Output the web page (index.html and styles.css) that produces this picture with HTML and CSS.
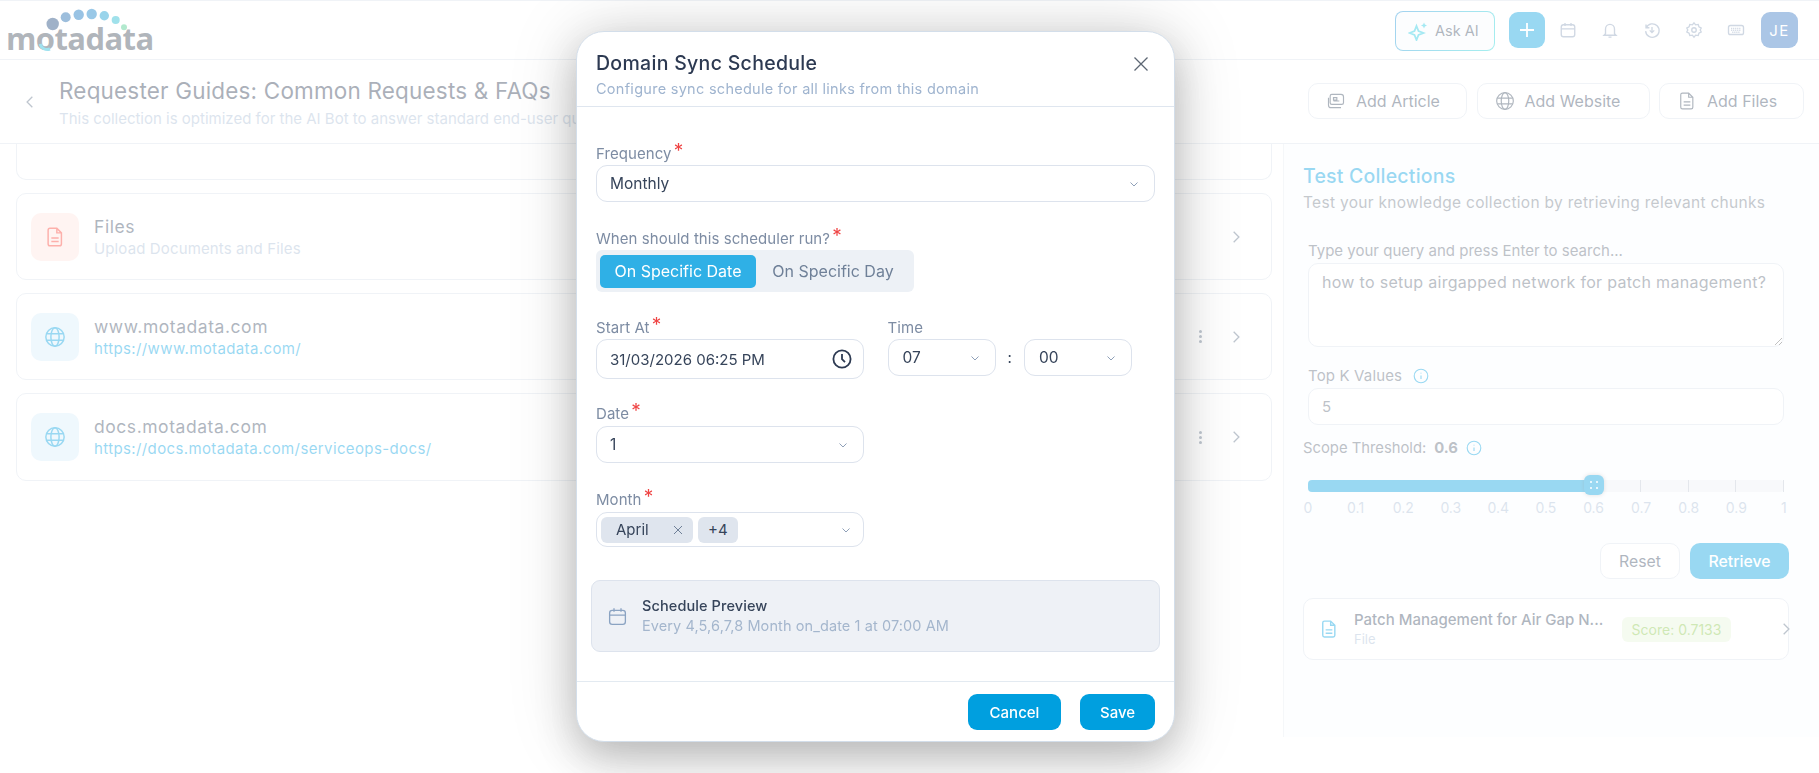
FILE: index.html
```html
<!DOCTYPE html>
<html lang="en">
<head>
    <meta charset="UTF-8">
    <meta name="viewport" content="width=device-width, initial-scale=1.0">
    <title>Domain Sync Schedule</title>
    <link rel="stylesheet" href="styles.css">
</head>
<body>

<svg class="sprite" xmlns="http://www.w3.org/2000/svg">
    <symbol id="i-cal" viewBox="0 0 24 24"><rect x="3" y="5" width="18" height="16" rx="3"/><path d="M3 10.5h18M8 2.5v4M16 2.5v4"/></symbol>
    <symbol id="i-bell" viewBox="0 0 24 24"><path d="M6 17V10.5a6 6 0 0 1 12 0V17l2 2H4zM10 21.5h4"/></symbol>
    <symbol id="i-history" viewBox="0 0 24 24"><path d="M4 4.5v4.5h4.5M4.3 9a9 9 0 1 1-.8 4.5M12 8v7M9 12.5l3 3 3-3"/></symbol>
    <symbol id="i-gear" viewBox="0 0 24 24"><circle cx="12" cy="12" r="3"/><path d="M12 2.5l2.2 2.6 3.4-.5 1 3.2 3 1.7-1.3 2.5 1.3 2.5-3 1.7-1 3.2-3.4-.5-2.2 2.6-2.2-2.6-3.4.5-1-3.2-3-1.7L3.700 12 2.400 9.500l3-1.700 1-3.200 3.400.5z"/></symbol>
    <symbol id="i-keys" viewBox="0 0 24 24"><rect x="2" y="6" width="20" height="12" rx="2.500"/><path d="M5.500 10h13M5.500 12.500h13M7 15h10" stroke-dasharray="1.500 1.200"/></symbol>
    <symbol id="i-globe" viewBox="0 0 24 24"><circle cx="12" cy="12" r="10"/><ellipse cx="12" cy="12" rx="4.500" ry="10"/><path d="M2.800 8.500h18.400M2.800 15.500h18.400"/></symbol>
    <symbol id="i-file" viewBox="0 0 24 24"><path d="M6.500 2.500h7.500l5 5v12a2 2 0 0 1-2 2h-10.500a2 2 0 0 1-2-2v-15a2 2 0 0 1 2-2zM14 2.500v5h5M8 13h8M8 17h8"/></symbol>
    <symbol id="i-article" viewBox="0 0 24 24"><path d="M7 4h11a3 3 0 0 1 3 3v7a2 2 0 0 1-2 2H7a2 2 0 0 1-2-2V6a2 2 0 0 1 2-2zM3 8v9a3 3 0 0 0 3 3h12M9 8h4v3H9zM16 12H9"/></symbol>
    <symbol id="i-down" viewBox="0 0 12 12"><path d="M2.500 4.500L6 8l3.500-3.500"/></symbol>
    <symbol id="i-right" viewBox="0 0 12 12"><path d="M4 1.500L8.500 6 4 10.500"/></symbol>
    <symbol id="i-info" viewBox="0 0 16 16"><circle cx="8" cy="8" r="6.800"/><path d="M8 7.500v3.500M8 4.700v.8"/></symbol>
</svg>

<div class="app">
    <header class="topbar">
        <div class="logo">
            <svg class="logo-dots" viewBox="0 0 150 60" width="150" height="60">
                <circle cx="52.700" cy="24" r="6.200" fill="#0f3c75"/>
                <circle cx="65.700" cy="17.300" r="5" fill="#0a5ea8"/>
                <circle cx="78.700" cy="14.700" r="5.200" fill="#0069bb"/>
                <circle cx="91.700" cy="14" r="5.200" fill="#0076c4"/>
                <circle cx="104.300" cy="15.700" r="4.700" fill="#0093cc"/>
                <circle cx="115.700" cy="20" r="4" fill="#12b4cc"/>
                <circle cx="124" cy="27.300" r="3" fill="#3fc886"/>
                <path d="M40 44a7.500 7.500 0 0 0 10 5" fill="none" stroke="#10b6d8" stroke-width="3"/>
            </svg>
            <span class="logo-text">motadata</span>
        </div>
        <div class="top-actions">
            <button class="ask-ai">
                <svg class="spark" viewBox="0 0 20 20" width="20" height="20"><path d="M8.500 5l2 5 5 2-5 2-2 5-2-5-5-2 5-2z"/><path d="M16 1.500l.9 2.100 2.100.9-2.100.9-.9 2.100-.9-2.100-2.100-.9 2.100-.9z" class="spark-fill"/></svg>
                Ask AI
            </button>
            <button class="plus-btn">
                <svg viewBox="0 0 20 20" width="20" height="20"><path d="M10 3v14M3 10h14"/></svg>
            </button>
            <span class="nav-icons">
                <svg class="nav-icon"><use href="#i-cal"/></svg>
                <svg class="nav-icon"><use href="#i-bell"/></svg>
                <svg class="nav-icon"><use href="#i-history"/></svg>
                <svg class="nav-icon"><use href="#i-gear"/></svg>
                <svg class="nav-icon"><use href="#i-keys"/></svg>
            </span>
            <span class="avatar">JE</span>
        </div>
    </header>

    <section class="page-head">
        <svg class="back-icon"><use href="#i-right"/></svg>
        <div class="page-titles">
            <h1>Requester Guides: Common Requests &amp; FAQs</h1>
            <p>This collection is optimized for the AI Bot to answer standard end-user questions and common requests</p>
        </div>
        <div class="head-btns">
            <button class="add-btn btn-article"><svg><use href="#i-article"/></svg>Add Article</button>
            <button class="add-btn btn-website"><svg><use href="#i-globe"/></svg>Add Website</button>
            <button class="add-btn btn-files"><svg><use href="#i-file"/></svg>Add Files</button>
        </div>
    </section>

    <div class="columns">
        <main class="sources">
            <div class="card card-cut"></div>

            <div class="card">
                <span class="tile tile-red"><svg><use href="#i-file"/></svg></span>
                <div class="card-text">
                    <div class="card-title">Files</div>
                    <div class="card-sub">Upload Documents and Files</div>
                </div>
                <svg class="card-arrow"><use href="#i-right"/></svg>
            </div>

            <div class="card">
                <span class="tile tile-blue"><svg><use href="#i-globe"/></svg></span>
                <div class="card-text">
                    <div class="card-title">www.motadata.com</div>
                    <div class="card-link">https://www.motadata.com/</div>
                </div>
                <span class="kebab"><i></i><i></i><i></i></span>
                <svg class="card-arrow"><use href="#i-right"/></svg>
            </div>

            <div class="card card-last">
                <span class="tile tile-blue"><svg><use href="#i-globe"/></svg></span>
                <div class="card-text">
                    <div class="card-title">docs.motadata.com</div>
                    <div class="card-link">https://docs.motadata.com/serviceops-docs/</div>
                </div>
                <span class="kebab"><i></i><i></i><i></i></span>
                <svg class="card-arrow"><use href="#i-right"/></svg>
            </div>
        </main>

        <aside class="test-panel">
            <h2>Test Collections</h2>
            <p class="test-sub">Test your knowledge collection by retrieving relevant chunks</p>

            <label class="test-label query-label">Type your query and press Enter to search...</label>
            <textarea class="query" readonly>how to setup airgapped network for patch management?</textarea>

            <div class="test-label topk-label">Top K Values <svg class="info"><use href="#i-info"/></svg></div>
            <div class="topk">5</div>

            <div class="scope">Scope Threshold: <b>0.6</b> <svg class="info"><use href="#i-info"/></svg></div>

            <div class="track">
                <span class="tick"></span><span class="tick"></span><span class="tick"></span><span class="tick"></span>
                <span class="fill"></span>
                <span class="thumb"><i></i><i></i><i></i><i></i></span>
            </div>
            <div class="scale">
                <span>0</span><span>0.1</span><span>0.2</span><span>0.3</span><span>0.4</span><span>0.5</span>
                <span>0.6</span><span>0.7</span><span>0.8</span><span>0.9</span><span>1</span>
            </div>

            <div class="test-btns">
                <button class="reset">Reset</button>
                <button class="retrieve">Retrieve</button>
            </div>

            <div class="result">
                <svg class="result-icon"><use href="#i-file"/></svg>
                <div class="result-text">
                    <div class="result-title">Patch Management for Air Gap N...</div>
                    <div class="result-type">File</div>
                </div>
                <span class="score">Score: 0.7133</span>
                <svg class="result-arrow"><use href="#i-right"/></svg>
            </div>
        </aside>
    </div>
</div>

<div class="overlay">
    <div class="modal">
        <div class="modal-head">
            <div>
                <h3>Domain Sync Schedule</h3>
                <p>Configure sync schedule for all links from this domain</p>
            </div>
            <svg class="close" viewBox="0 0 16 16" width="16" height="16"><path d="M1.500 1.500l13 13M14.500 1.500l-13 13"/></svg>
        </div>

        <div class="modal-body">
            <div class="field field-freq">
                <div class="label">Frequency <em>*</em></div>
                <div class="select">Monthly <svg class="chev"><use href="#i-down"/></svg></div>
            </div>

            <div class="field field-when">
                <div class="label">When should this scheduler run? <em>*</em></div>
                <div class="segment">
                    <span class="seg seg-on">On Specific Date</span>
                    <span class="seg">On Specific Day</span>
                </div>
            </div>

            <div class="time-row">
                <div class="field field-start">
                    <div class="label">Start At <em>*</em></div>
                    <div class="select select-date">
                        31/03/2026 06:25 PM
                        <svg class="clock" viewBox="0 0 20 20" width="20" height="20"><circle cx="10" cy="10" r="8.600"/><path d="M10 5v5.200l3 3"/></svg>
                    </div>
                </div>
                <div class="field field-time">
                    <div class="label">Time</div>
                    <div class="time-selects">
                        <div class="select select-time">07 <svg class="chev"><use href="#i-down"/></svg></div>
                        <span class="colon">:</span>
                        <div class="select select-time">00 <svg class="chev"><use href="#i-down"/></svg></div>
                    </div>
                </div>
            </div>

            <div class="field field-date">
                <div class="label">Date <em>*</em></div>
                <div class="select select-half">1 <svg class="chev"><use href="#i-down"/></svg></div>
            </div>

            <div class="field field-month">
                <div class="label">Month <em>*</em></div>
                <div class="select select-half select-tags">
                    <span class="tag tag-april">April <svg viewBox="0 0 10 10" width="10" height="10"><path d="M1 1l8 8M9 1l-8 8"/></svg></span>
                    <span class="tag">+4</span>
                    <svg class="chev"><use href="#i-down"/></svg>
                </div>
            </div>

            <div class="preview">
                <svg class="preview-icon"><use href="#i-cal"/></svg>
                <div>
                    <div class="preview-title">Schedule Preview</div>
                    <div class="preview-sub">Every 4,5,6,7,8 Month on_date 1 at 07:00 AM</div>
                </div>
            </div>
        </div>

        <div class="modal-foot">
            <button class="foot-btn btn-cancel">Cancel</button>
            <button class="foot-btn btn-save">Save</button>
        </div>
    </div>
</div>

</body>
</html>
```
FILE: styles.css
```css
* {
    box-sizing: border-box;
}

body, html {
    margin: 0;
    padding: 0;
    height: 100%;
    overflow: hidden;
    font-family: Inter, "Open Sans", sans-serif;
    color: #2d3a52;
    background: #fff;
}

h1, h2, h3, p {
    margin: 0;
    font-weight: 500;
}

button {
    font-family: inherit;
    cursor: pointer;
}

.sprite {
    display: none;
}

/* App frame */
.app {
    height: 737px;
    border-top: 1px solid #d9e1ea;
    display: flex;
    flex-direction: column;
}

.topbar {
    height: 59px;
    flex: none;
    display: flex;
    justify-content: space-between;
    border-bottom: 1px solid #d9e1ea;
    padding-right: 21px;
}

.logo {
    position: relative;
    width: 160px;
    padding: 17px 0 0 6px;
}

.logo-dots {
    position: absolute;
    left: 0;
    top: -1px;
}

.logo-text {
    font-family: "Open Sans", sans-serif;
    font-weight: 700;
    font-size: 31px;
    line-height: 40px;
    letter-spacing: -0.6px;
    color: #3a4656;
}

.top-actions {
    display: flex;
    align-items: center;
}

.ask-ai {
    width: 100px;
    height: 40px;
    margin-top: 1px;
    border: 1.5px solid transparent;
    border-radius: 8px;
    background: linear-gradient(#f8fafc, #f8fafc) padding-box, linear-gradient(120deg, #1b8fd8, #1fd6d6) border-box;
    color: #394a5f;
    font-size: 14.500px;
    font-weight: 400;
    display: flex;
    align-items: center;
    gap: 7px;
    padding: 0 0 0 12px;
}

.spark path {
    fill: none;
    stroke: #1ec8e0;
    stroke-width: 1.800;
}

.spark .spark-fill {
    fill: #1ec8e0;
    stroke: none;
}

.plus-btn {
    width: 36px;
    height: 36px;
    margin-left: 14px;
    border: none;
    border-radius: 9px;
    background: #009fdf;
    padding: 8px;
}

.plus-btn path {
    stroke: #fff;
    stroke-width: 1.800;
    fill: none;
}

.nav-icons {
    display: flex;
    gap: 24px;
    margin: 0 16px 0 14px;
}

.nav-icon {
    width: 18px;
    height: 18px;
    fill: none;
    stroke: #899db9;
    stroke-width: 1.800;
}

.avatar {
    width: 37px;
    height: 36px;
    border-radius: 9px;
    background: #2d70c0;
    color: #fff;
    font-size: 15px;
    letter-spacing: 1.500px;
    display: flex;
    align-items: center;
    justify-content: center;
}

/* Page heading */
.page-head {
    height: 84px;
    flex: none;
    display: flex;
    border-bottom: 1px solid #d9e1ea;
    padding-right: 15px;
}

.back-icon {
    width: 14px;
    height: 14px;
    margin: 35px 0 0 23px;
    transform: scaleX(-1);
    fill: none;
    stroke: #5f7187;
    stroke-width: 1.100;
}

.page-titles {
    flex: 1;
    min-width: 0;
    padding: 15px 0 0 22px;
    white-space: nowrap;
    overflow: hidden;
}

.page-titles h1 {
    font-size: 22.500px;
    line-height: 32px;
    font-weight: 400;
    letter-spacing: 0.18px;
}

.page-titles p {
    font-size: 15px;
    line-height: 22px;
    margin-top: 1px;
    font-weight: 400;
    color: #a9bcd4;
}

.head-btns {
    display: flex;
    gap: 9.500px;
    padding-top: 23px;
}

.add-btn {
    height: 36px;
    background: #fff;
    border: 1px solid #d9e1ea;
    border-radius: 10px;
    color: #394a5f;
    font-size: 16px;
    display: flex;
    align-items: center;
    gap: 10px;
    padding: 0 0 0 17px;
}

.add-btn svg {
    width: 20px;
    height: 20px;
    fill: none;
    stroke: #394a5f;
    stroke-width: 1.400;
}

.btn-article {
    width: 159px;
}

.btn-website {
    width: 173px;
}

.btn-files {
    width: 145px;
}

/* Columns */
.columns {
    flex: 1;
    display: flex;
    min-height: 0;
}

.sources {
    width: 1283px;
    flex: none;
    padding: 0 11px 0 16px;
    display: flex;
    flex-direction: column;
    gap: 13px;
}

.card {
    height: 87px;
    flex: none;
    border: 1px solid #d9e1ea;
    border-radius: 10px;
    background: #fff;
    display: flex;
    align-items: center;
    padding: 0 28px 0 14px;
}

.card-cut {
    height: 36px;
    border-top: none;
    border-radius: 0 0 10px 10px;
}

.card-last {
    height: 88px;
}

.tile {
    width: 48px;
    height: 48px;
    flex: none;
    border-radius: 10px;
    display: flex;
    align-items: center;
    justify-content: center;
}

.tile svg {
    width: 22px;
    height: 22px;
    fill: none;
    stroke-width: 1.600;
}

.tile-red {
    background: #ffe3de;
}

.tile-red svg {
    stroke: #f93a2f;
}

.tile-blue {
    background: #d7edfa;
}

.tile-blue svg {
    stroke: #009fdf;
}

.card-text {
    flex: 1;
    margin-left: 15px;
    padding-top: 2px;
}

.card-title {
    font-size: 17.500px;
    line-height: 22px;
    letter-spacing: 0.55px;
    color: #394a5f;
}

.card-sub, .card-link {
    font-size: 15px;
    line-height: 22px;
    letter-spacing: 0.13px;
    color: #a9bcd4;
}

.card-link {
    letter-spacing: 0.38px;
    color: #009fdf;
}

.kebab {
    display: flex;
    flex-direction: column;
    gap: 2px;
    margin-right: 27px;
}

.kebab i {
    width: 3px;
    height: 3px;
    border-radius: 50%;
    background: #5f7187;
}

.card-arrow {
    width: 14px;
    height: 14px;
    fill: none;
    stroke: #5f7187;
    stroke-width: 1.100;
}

/* Test panel */
.test-panel {
    flex: 1;
    min-width: 0;
    border-left: 1px solid #e5eaf0;
    background: #fafcff;
    padding: 19px 30px 0 19px;
}

.test-panel h2 {
    font-size: 19.500px;
    line-height: 26px;
    letter-spacing: 0.2px;
    color: #009fdf;
}

.test-sub {
    font-size: 15.500px;
    line-height: 22px;
    letter-spacing: 0.3px;
    margin-top: 3px;
    font-weight: 400;
    color: #6e7885;
    white-space: nowrap;
}

.test-label {
    font-size: 15px;
    line-height: 20px;
    letter-spacing: 0.15px;
    color: #5a6675;
    margin-left: 5px;
    display: block;
}

.query-label {
    margin-top: 27px;
    letter-spacing: 0;
}

.query {
    display: block;
    width: 476px;
    height: 84px;
    margin: 2px 0 0 5px;
    border: 1px solid #d9e1ea;
    border-radius: 10px;
    background: #fff;
    padding: 7px 13px;
    font-family: inherit;
    font-size: 16px;
    line-height: 22px;
    letter-spacing: 0.3px;
    color: #5a6675;
    outline: none;
}

.topk-label {
    margin-top: 19px;
    display: flex;
    align-items: center;
    gap: 11px;
}

.info {
    width: 16px;
    height: 16px;
    fill: none;
    stroke: #009fdf;
    stroke-width: 1.100;
}

.topk {
    width: 476px;
    height: 37px;
    margin: 2px 0 0 5px;
    border: 1px solid #d9e1ea;
    border-radius: 10px;
    background: #fff;
    padding: 0 13px;
    font-size: 15px;
    line-height: 35px;
    color: #5a6675;
}

.scope {
    margin-top: 13px;
    font-size: 14.800px;
    line-height: 20px;
    color: #5a6675;
    display: flex;
    align-items: center;
    gap: 8px;
}

.scope b {
    font-weight: 700;
}

.track {
    position: relative;
    width: 476px;
    height: 12px;
    margin: 22px 0 0 5px;
    border-radius: 4px;
    background: #edf1f6;
    display: flex;
    justify-content: space-between;
    padding-left: 332px;
}

.tick {
    width: 1px;
    background: #bcc4cf;
}

.fill {
    position: absolute;
    left: 0;
    top: 0;
    width: 282px;
    height: 100%;
    border-radius: 4px;
    background: #009fdf;
}

.thumb {
    position: absolute;
    left: 276px;
    top: -5px;
    width: 20px;
    height: 20px;
    border-radius: 6px;
    background: #009fdf;
    box-shadow: 0 0 4px rgba(0, 0, 0, 0.3);
    display: grid;
    grid-template-columns: 2px 2px;
    gap: 4px;
    justify-content: center;
    align-content: center;
}

.thumb i {
    width: 2px;
    height: 2px;
    background: #fff;
    border-radius: 50%;
}

.scale {
    width: 476px;
    height: 16px;
    margin: 8px 0 0 5px;
    display: flex;
    justify-content: space-between;
    font-size: 14px;
    line-height: 16px;
    color: #a9bcd4;
}

.scale span {
    width: 0;
    display: flex;
    justify-content: center;
}

.test-btns {
    display: flex;
    justify-content: flex-end;
    gap: 10px;
    margin-top: 27px;
}

.reset, .retrieve {
    height: 36px;
    border-radius: 10px;
    font-size: 15.800px;
    padding: 0;
}

.reset {
    width: 80px;
    background: #fff;
    border: 1px solid #d9e1ea;
    color: #394a5f;
}

.retrieve {
    width: 99px;
    border: none;
    background: #009fdf;
    color: #fff;
    font-weight: 500;
}

.result {
    height: 62px;
    margin-top: 19px;
    border: 1px solid #d9e1ea;
    border-radius: 10px;
    background: #fff;
    display: flex;
    align-items: center;
    padding-left: 15px;
}

.result-icon {
    width: 20px;
    height: 20px;
    flex: none;
    fill: none;
    stroke: #009fdf;
    stroke-width: 1.700;
}

.result-text {
    width: 268px;
    flex: none;
    margin-left: 15px;
}

.result-title {
    font-size: 15px;
    line-height: 20px;
    font-weight: 500;
    color: #394a5f;
    white-space: nowrap;
}

.result-type {
    font-size: 13px;
    line-height: 18px;
    color: #a9bcd4;
}

.score {
    width: 109px;
    height: 25px;
    flex: none;
    border-radius: 6px;
    background: #e6f5d9;
    color: #87c546;
    font-size: 14px;
    line-height: 25px;
    text-align: center;
}

.result-arrow {
    width: 14px;
    height: 14px;
    flex: none;
    margin-left: 48px;
    fill: none;
    stroke: #5f7187;
    stroke-width: 1.100;
}

/* Modal */
.overlay {
    position: fixed;
    left: 0;
    top: 0;
    width: 100%;
    height: 100%;
    background: rgba(255, 255, 255, 0.6);
    backdrop-filter: blur(0.5px);
}

.modal {
    position: absolute;
    left: 576px;
    top: 31px;
    width: 599px;
    height: 711px;
    background: #fff;
    border: 1px solid #d3deea;
    border-radius: 28px;
    box-shadow: 0 16px 40px rgba(0, 0, 0, 0.22), 0 0 70px rgba(0, 0, 0, 0.15);
    display: flex;
    flex-direction: column;
}

.modal-head {
    height: 75px;
    flex: none;
    border-bottom: 1px solid #dfe6ef;
    padding: 18px 25px 0 19px;
    display: flex;
    justify-content: space-between;
}

.modal-head h3 {
    font-size: 19.500px;
    line-height: 26px;
    letter-spacing: 0.3px;
    font-weight: 500;
    color: #2d3a52;
}

.modal-head p {
    font-size: 14.500px;
    line-height: 20px;
    letter-spacing: 0.28px;
    margin-top: 3px;
    font-weight: 400;
    color: #9fb4cf;
}

.close {
    margin-top: 6px;
    fill: none;
    stroke: #5c6673;
    stroke-width: 1.300;
}

.modal-body {
    flex: 1;
    padding: 37px 19px 0 19px;
}

.label {
    font-size: 15px;
    line-height: 20px;
    letter-spacing: 0.06px;
    color: #7d8ca3;
}

.label em {
    font-style: normal;
    font-size: 19px;
    line-height: 0;
    margin-left: -2px;
    color: #ef4444;
    vertical-align: 2px;
}

.field-when {
    margin-top: 27px;
}

.time-row {
    margin-top: 26px;
    display: flex;
    gap: 23.500px;
    align-items: flex-start;
}

.field-date {
    margin-top: 25px;
}

.field-month {
    margin-top: 27px;
}

.select {
    height: 37px;
    margin-top: 1px;
    border: 1px solid #dde3ed;
    border-radius: 11px;
    display: flex;
    align-items: center;
    justify-content: space-between;
    padding: 0 14px 0 13px;
    font-size: 15.500px;
    color: #36445a;
}

.chev {
    width: 12px;
    height: 12px;
    fill: none;
    stroke: #8fa0b8;
    stroke-width: 1;
}

.segment {
    width: 318px;
    height: 42px;
    margin-top: 1px;
    border-radius: 6px;
    background: #edf1f6;
    display: flex;
    align-items: center;
    padding: 0 4px;
}

.seg {
    height: 33px;
    flex: 1;
    font-size: 16px;
    line-height: 33px;
    text-align: center;
    color: #6f8098;
}

.seg-on {
    flex: none;
    width: 156px;
    border-radius: 5px;
    background: #2fb0e6;
    color: #fff;
}

.field-start {
    width: 268px;
    flex: none;
}

.select-date {
    height: 40px;
    padding-right: 11px;
    font-size: 15px;
}

.clock {
    fill: none;
    stroke: #2d3a52;
    stroke-width: 1.800;
}

.time-selects {
    display: flex;
    align-items: center;
}

.select-time {
    width: 108px;
    padding-left: 14px;
}

.colon {
    width: 28.500px;
    text-align: center;
    font-size: 15px;
    color: #36445a;
}

.select-half {
    width: 268px;
    margin-top: 2px;
}

.select-tags {
    height: 35px;
    justify-content: flex-start;
    gap: 5px;
    padding-left: 4px;
    padding-right: 11px;
}

.select-tags .chev {
    margin-left: auto;
}

.tag {
    height: 26px;
    border-radius: 6px;
    background: #dfe5ee;
    font-size: 15px;
    line-height: 26px;
    padding: 0 10px;
}

.tag-april {
    width: 92px;
    padding: 0 10px 0 15px;
    display: flex;
    align-items: center;
    justify-content: space-between;
}

.tag-april svg {
    fill: none;
    stroke: #6f8098;
    stroke-width: 1;
}

.preview {
    height: 72px;
    margin: 33px -5px 0;
    border: 1px solid #dde3ed;
    border-radius: 9px;
    background: #eef1f6;
    display: flex;
    align-items: center;
    gap: 14px;
    padding-left: 15px;
}

.preview-icon {
    width: 21px;
    height: 21px;
    flex: none;
    fill: none;
    stroke: #8aa3c2;
    stroke-width: 1.500;
}

.preview-title {
    font-size: 14.500px;
    line-height: 20px;
    letter-spacing: 0.1px;
    font-weight: 500;
    color: #36445a;
}

.preview-sub {
    font-size: 14.500px;
    line-height: 20px;
    letter-spacing: 0.1px;
    color: #a4b6cd;
}

.modal-foot {
    height: 60px;
    flex: none;
    border-top: 1px solid #e3eaf1;
    display: flex;
    justify-content: flex-end;
    gap: 19px;
    padding: 12px 19px 0 0;
}

.foot-btn {
    height: 36px;
    border: none;
    border-radius: 9px;
    background: #009fdf;
    color: #fff;
    font-size: 15px;
    font-weight: 500;
    padding: 0;
}

.btn-cancel {
    width: 93px;
}

.btn-save {
    width: 75px;
}
```
